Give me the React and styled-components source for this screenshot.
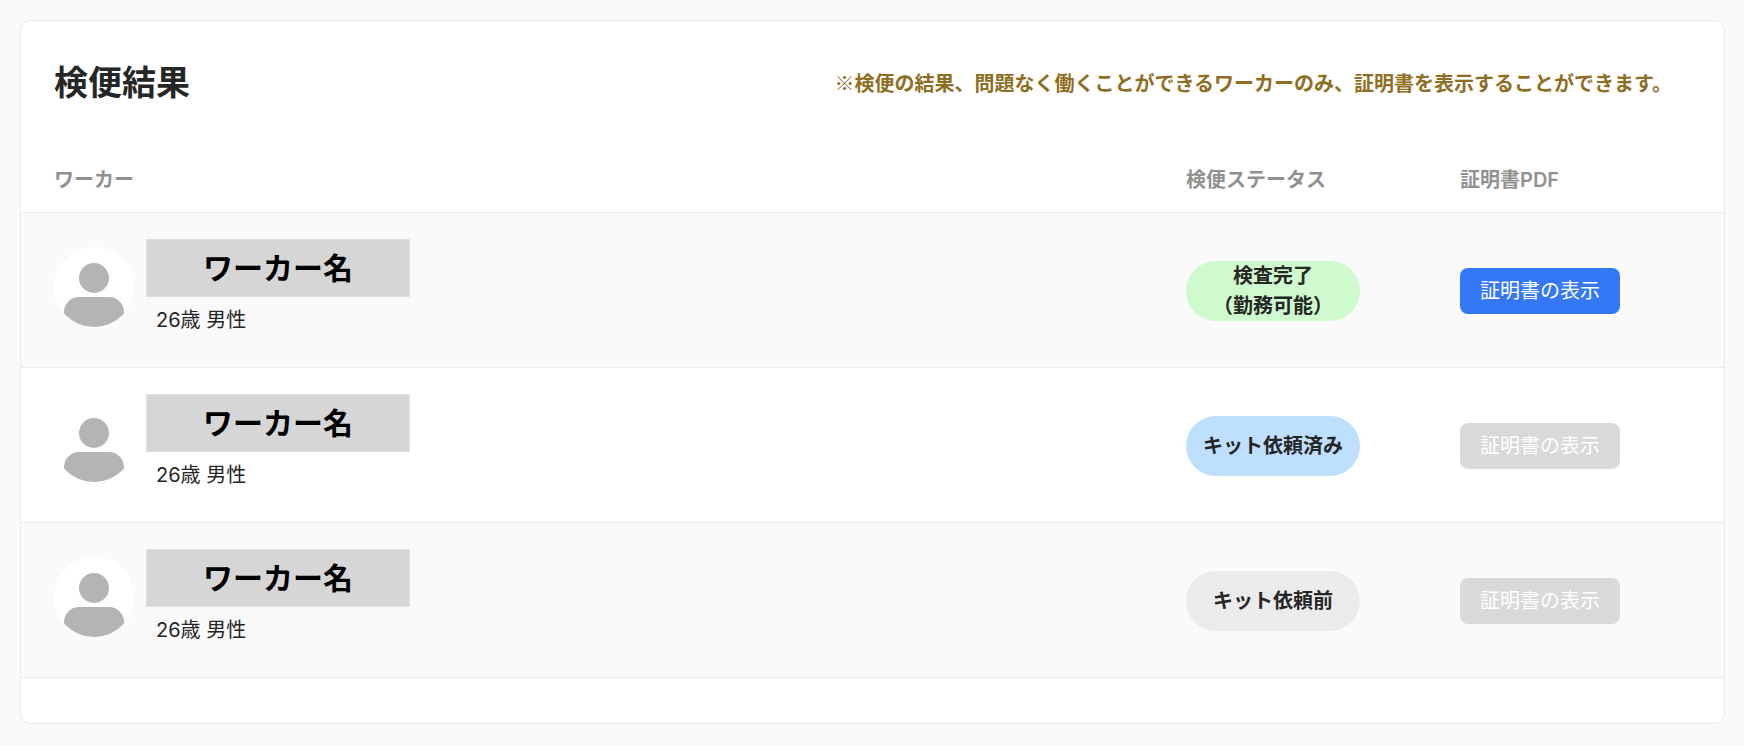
import React from 'react';
import styled, { createGlobalStyle } from "styled-components";

const workers = [
    {id:1,name:"ワーカー名",profile:"26歳 男性",status:"done",lines:["検査完了","（勤務可能）"],canShow:true},
    {id:2,name:"ワーカー名",profile:"26歳 男性",status:"requested",lines:["キット依頼済み"],canShow:false},
    {id:3,name:"ワーカー名",profile:"26歳 男性",status:"before",lines:["キット依頼前"],canShow:false},
]

const statusColors = {
    done:"#cefacd",
    requested:"#bedffd",
    before:"#ebebeb",
}

function Avatar({id}) {
  return(
    <AvatarSvg viewBox="0 0 80 80" aria-hidden="true">
        <clipPath id={`avatar-${id}`}>
            <circle cx="40" cy="40" r="40"/>
        </clipPath>
        <circle cx="40" cy="40" r="40" fill="#fff"/>
        <g clipPath={`url(#avatar-${id})`} fill="#b4b4b4">
            <circle cx="40" cy="31" r="15"/>
            <rect x="10" y="50" width="60" height="40" rx="15"/>
        </g>
    </AvatarSvg>
  )
}

function WorkerRow({worker}) {
  return(
    <Row>
        <WorkerCell>
            <Worker>
                <Avatar id={worker.id}/>
                <div>
                    <Name>{worker.name}</Name>
                    <Profile>{worker.profile}</Profile>
                </div>
            </Worker>
        </WorkerCell>
        <Cell>
            <Status $status={worker.status}>
                {worker.lines.map(line => <span key={line}>{line}</span>)}
            </Status>
        </Cell>
        <Cell>
            <PdfButton type="button" disabled={!worker.canShow}>証明書の表示</PdfButton>
        </Cell>
    </Row>
  )
}

function App() {
  return(
    <Page>
        <GlobalStyle/>
        <Card>
            <CardHeader>
                <Title>検便結果</Title>
                <Note>※検便の結果、問題なく働くことができるワーカーのみ、証明書を表示することができます。</Note>
            </CardHeader>
            <Table>
                <thead>
                    <tr>
                        <HeadCell scope="col">ワーカー</HeadCell>
                        <HeadCell scope="col" $width="274px">検便ステータス</HeadCell>
                        <HeadCell scope="col" $width="264px">証明書PDF</HeadCell>
                    </tr>
                </thead>
                <tbody>
                    {workers.map(worker => <WorkerRow key={worker.id} worker={worker}/>)}
                </tbody>
            </Table>
        </Card>
    </Page>
  )
}

export default App;

const GlobalStyle = createGlobalStyle`
    *{
        box-sizing:border-box;
    }
    body{
        margin:0;
        background-color:#fafafa;
        color:#262626;
        font-family:Inter,"Noto Sans CJK JP",sans-serif;
        font-size:20px;
        line-height:30px;
    }
`
const Page = styled.main`
    padding:20px 19px 20px 20px;
`
const Card = styled.section`
    background-color:#fff;
    border:1px solid #ebebeb;
    border-radius:10px;
    padding-bottom:45px;
    overflow:hidden;
`
const CardHeader = styled.header`
    display:flex;
    justify-content:space-between;
    align-items:center;
    gap:24px;
    padding:37px 52px 38px 33px;
`
const Title = styled.h1`
    margin:0;
    font-size:34px;
    line-height:50px;
    font-weight:700;
    white-space:nowrap;
`
const Note = styled.p`
    margin:0;
    color:#8f6e1f;
    font-family:"Noto Sans CJK JP",sans-serif;//full-width ※
    font-weight:700;
`
const Table = styled.table`
    width:100%;
    table-layout:fixed;
    border-collapse:separate;
    border-spacing:0;
`
const HeadCell = styled.th`
    width:${props => props.$width || "auto"};
    padding:19px 0 17px;
    border-bottom:1px solid #ebebeb;
    color:#919191;
    font-weight:600;
    text-align:left;
    &:first-child{
        padding-left:33px;
    }
`
const Row = styled.tr`
    &:nth-child(odd){
        background-color:#fafafa;
    }
`
const Cell = styled.td`
    height:155px;
    padding:2px 0 0;
    border-bottom:1px solid #ebebeb;
    vertical-align:middle;
`
const WorkerCell = styled(Cell)`
    padding:26px 0 0 33px;
    vertical-align:top;
`
const Worker = styled.div`
    display:flex;
    align-items:flex-start;
    gap:12px;
`
const AvatarSvg = styled.svg`
    width:80px;
    height:80px;
    margin-top:8px;
    flex-shrink:0;
`
const Name = styled.div`
    display:flex;
    justify-content:center;
    align-items:center;
    width:264px;
    height:58px;
    margin-bottom:8px;
    background-color:#d6d6d6;
    border:1px solid #e0e0e0;
    color:#000;
    font-size:30px;
    font-weight:700;
`
const Profile = styled.div`
    padding-left:10px;
`
const Status = styled.div`
    display:flex;
    flex-direction:column;
    justify-content:center;
    align-items:center;
    width:174px;
    height:60px;
    border-radius:30px;
    background-color:${props => statusColors[props.$status]};
    font-weight:700;
`
const PdfButton = styled.button`
    width:160px;
    height:46px;
    padding:0;
    border:none;
    border-radius:8px;
    background-color:#3478f6;
    color:#fff;
    font:inherit;
    cursor:pointer;
    &:disabled{
        background-color:#d9d9d9;
        cursor:default;
    }
`
